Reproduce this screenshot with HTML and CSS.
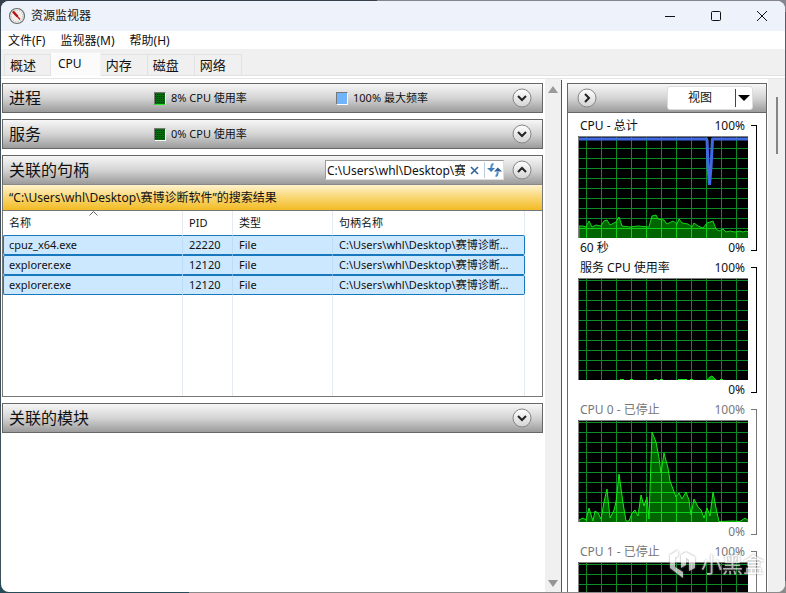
FILE: index.html
```html
<!DOCTYPE html>
<html lang="zh-CN">
<head>
<meta charset="utf-8">
<title>资源监视器</title>
<link rel="stylesheet" href="styles.css">
</head>
<body>
<svg class="defs" aria-hidden="true">
  <defs>
    <pattern id="grid" width="15" height="10" x="8" y="2" patternUnits="userSpaceOnUse"><path d="M.5 0V10M0 .5H15" stroke="#0c8c28" fill="none"/></pattern>
    <pattern id="lit" width="15" height="10" x="8" y="2" patternUnits="userSpaceOnUse"><path fill="#006400" d="M0 0H15V10H0z"/><path d="M.5 0V10M0 .5H15" stroke="#0cd016" fill="none"/></pattern>
    <linearGradient id="knob" x2="0" y2="1"><stop stop-color="#fff"/><stop offset="1" stop-color="#d2d2d2"/></linearGradient>
    <symbol id="down" viewBox="0 0 20 20"><circle cx="10" cy="10" r="9" fill="url(#knob)" stroke="#858585"/><path d="M6 8l4 4 4-4" fill="none" stroke="#222" stroke-width="2"/></symbol>
    <symbol id="up" viewBox="0 0 20 20"><circle cx="10" cy="10" r="9" fill="url(#knob)" stroke="#858585"/><path d="M6 12l4-4 4 4" fill="none" stroke="#222" stroke-width="2"/></symbol>
    <symbol id="right" viewBox="0 0 20 20"><circle cx="10" cy="10" r="9" fill="url(#knob)" stroke="#858585"/><path d="M8 6l4 4-4 4" fill="none" stroke="#222" stroke-width="2"/></symbol>
  </defs>
</svg>
<div class="window">
  <header class="titlebar">
    <svg width="18" height="18" viewBox="0 0 18 18" aria-hidden="true"><circle cx="9" cy="9" r="7.500" fill="#f3eeec" stroke="#65736e" stroke-width="1.200"/><circle cx="9" cy="9" r="5.800" fill="none" stroke="#b9b0ac" stroke-dasharray="1 1.400"/><path d="M5 4.500L12 12.500" stroke="#c01c18" stroke-width="1.400"/><path d="M5 4.500L9.500 9.500" stroke="#b01510" stroke-width="2.400"/></svg>
    <h1>资源监视器</h1>
    <div class="caption">
      <button aria-label="最小化"><svg width="12" height="12"><path d="M1 6.500H11" stroke="#111"/></svg></button>
      <button aria-label="最大化"><svg width="12" height="12"><rect x="1.500" y="1.500" width="9" height="9" rx="1" fill="none" stroke="#111"/></svg></button>
      <button aria-label="关闭"><svg width="12" height="12"><path d="M1 1L11 11M11 1L1 11" stroke="#111"/></svg></button>
    </div>
  </header>
  <nav class="menu"><button>文件(F)</button><button>监视器(M)</button><button>帮助(H)</button></nav>
  <div class="tabs" role="tablist">
    <button role="tab">概述</button><button role="tab" class="active" aria-selected="true">CPU</button><button role="tab">内存</button><button role="tab">磁盘</button><button role="tab">网络</button>
  </div>
  <div class="content">
    <main class="main">
      <section class="bar">
        <h2>进程</h2>
        <span class="legend"><i class="chip green busy"></i>8% CPU 使用率</span>
        <span class="legend"><i class="chip blue"></i>100% 最大频率</span>
        <button class="knob" aria-label="展开进程"><svg width="20" height="20"><use href="#down"/></svg></button>
      </section>
      <section class="bar">
        <h2>服务</h2>
        <span class="legend"><i class="chip green"></i>0% CPU 使用率</span>
        <button class="knob" aria-label="展开服务"><svg width="20" height="20"><use href="#down"/></svg></button>
      </section>
      <section class="group">
        <div class="bar">
          <h2>关联的句柄</h2>
          <div class="search">
            <input type="text" aria-label="搜索句柄" value="C:\Users\whl\Desktop\赛博诊断软件">
            <button aria-label="清除"><svg width="9" height="9"><path d="M1 1L8 8M8 1L1 8" stroke="#32649a" stroke-width="1.600"/></svg></button>
            <button class="refresh" aria-label="刷新"><svg width="15" height="14" viewBox="0 0 15 14"><path d="M6.500 1C4.500 1 4.300 2.500 4.300 5" stroke="#4d8fc8" stroke-width="2" fill="none"/><path d="M0 5H8L4.200 9z" fill="#3c7ab8"/><path d="M8.500 13C10.500 13 10.700 11.500 10.700 9" stroke="#4d8fc8" stroke-width="2" fill="none"/><path d="M7 8.500H15L10.800 4.500z" fill="#2f6196"/></svg></button>
          </div>
          <button class="knob" aria-label="折叠句柄"><svg width="20" height="20"><use href="#up"/></svg></button>
        </div>
        <p class="result">“C:\Users\whl\Desktop\赛博诊断软件”的搜索结果</p>
        <div class="list">
          <table>
            <colgroup><col class="c-name"><col class="c-pid"><col class="c-type"><col></colgroup>
            <thead><tr><th>名称<svg class="sort" width="9" height="5"><path d="M.5 4.500L4.500.5L8.500 4.500" fill="none" stroke="#666"/></svg></th><th>PID</th><th>类型</th><th>句柄名称</th></tr></thead>
            <tbody>
              <tr><td>cpuz_x64.exe</td><td>22220</td><td>File</td><td>C:\Users\whl\Desktop\赛博诊断...</td></tr>
              <tr><td>explorer.exe</td><td>12120</td><td>File</td><td>C:\Users\whl\Desktop\赛博诊断...</td></tr>
              <tr><td>explorer.exe</td><td>12120</td><td>File</td><td>C:\Users\whl\Desktop\赛博诊断...</td></tr>
            </tbody>
            <tfoot><tr><td></td><td></td><td></td><td></td></tr></tfoot>
          </table>
        </div>
      </section>
      <section class="bar">
        <h2>关联的模块</h2>
        <button class="knob" aria-label="展开模块"><svg width="20" height="20"><use href="#down"/></svg></button>
      </section>
    </main>
    <div class="scroll"><svg width="10" height="7"><path d="M0 7L5 0L10 7z" fill="#9a9a9a"/></svg><svg width="10" height="7"><path d="M0 0H10L5 7z" fill="#959595"/></svg></div>
    <aside class="side">
      <div class="bar">
        <button class="knob" aria-label="隐藏图表"><svg width="20" height="20"><use href="#right"/></svg></button>
        <button class="view"><span>视图</span><svg width="16" height="18"><path d="M.5 0V18" stroke="#444"/><path d="M3 6H15L9 12z" fill="#000"/></svg></button>
      </div>
      <figure class="graph">
        <figcaption><span>CPU - 总计</span><span>100%</span></figcaption>
        <svg class="plot" viewBox="0 0 170 102" preserveAspectRatio="none"><rect width="170" height="102" fill="#000"/><rect width="170" height="102" fill="url(#grid)"/>
          <path fill="url(#lit)" stroke="#16d816" d="M1 103V90L5 90 8 91 11 85 14 91 18 89 23 90 26 85 29 84 32 89 38 86 41 81 44 90 52 91 60 90 71 91 74 80 78 79 80 83 86 84 89 88 95 85 99 88 101 83 104 87 110 88 114 91 116 87 120 90 125 92 129 87 135 85 138 93 141 95 145 93 148 96 152 95 157 96 162 95 165 96 168 95 171 96V103z"/>
          <path d="M1 3H129L130 31L131.500 49L133 31L134.500 3H170" fill="none" stroke="#4169e1" stroke-width="3"/><path d="M129 1h5l-2.500 4z" fill="#000"/><path d="M.5 102V.5H170" fill="none" stroke="#808080"/></svg>
        <div class="foot"><span>60 秒</span><span>0%</span></div><i class="bracket"></i>
      </figure>
      <figure class="graph">
        <figcaption><span>服务 CPU 使用率</span><span>100%</span></figcaption>
        <svg class="plot" viewBox="0 0 170 102" preserveAspectRatio="none"><rect width="170" height="102" fill="#000"/><rect width="170" height="102" fill="url(#grid)"/>
          <path d="M129 102L131 99.500L134 98L138 102z" fill="#00a000" stroke="#16d816"/><path d="M42 101.500h4M52 101.500h3M76 101.500h3M82 101.500h3M100 101.500h9M112 101.500h3M142 101.500h3" stroke="#20ee20"/><path d="M.5 102V.5H170" fill="none" stroke="#808080"/></svg>
        <div class="foot"><span></span><span>0%</span></div><i class="bracket"></i>
      </figure>
      <figure class="graph stopped">
        <figcaption><span>CPU 0 - 已停止</span><span>100%</span></figcaption>
        <svg class="plot" viewBox="0 0 170 102" preserveAspectRatio="none"><rect width="170" height="102" fill="#000"/><rect width="170" height="102" fill="url(#grid)"/>
          <path fill="url(#lit)" stroke="#16e816" d="M1 103V100L5 98 8 100 11 88 15 101 17 91 20 93 23 99 26 82 29 69 32 98 36 90 38 82 41 54 45 83 48 101 51 101 54 93 57 90 60 96 63 75 66 86 69 77 71 99 74 12 78 22 81 38 83 53 86 33 90 48 92 61 98 77 101 73 104 79 108 72 111 80 113 95 116 79 120 87 123 90 126 98 129 88 132 96 135 72 138 88 141 101.500 155 101 162 101.500 167 98 171 101V103z"/><path d="M.5 102V.5H170" fill="none" stroke="#808080"/></svg>
        <div class="foot"><span></span><span>0%</span></div><i class="bracket"></i>
      </figure>
      <figure class="graph stopped">
        <figcaption><span>CPU 1 - 已停止</span><span>100%</span></figcaption>
        <svg class="plot" viewBox="0 0 170 102" preserveAspectRatio="none"><rect width="170" height="102" fill="#000"/><rect width="170" height="102" fill="url(#grid)"/><path d="M.5 102V.5H170" fill="none" stroke="#808080"/></svg>
        <i class="bracket"></i>
      </figure>
    </aside>
    <div class="track"><i></i></div>
  </div>
  <div class="mark" aria-hidden="true"><svg width="28" height="30" viewBox="0 0 28 30"><path d="M9 1L1 6V19L14 29V23L6 18V9L9 7z" fill="#fff"/><path d="M12 14V6L17 3L26 8V19L20 22V11L17 9V16L12 19z" fill="#fff"/></svg><span>小黑盒</span></div>
</div>
</body>
</html>
```
FILE: styles.css
```css
* { box-sizing: border-box; }
body {
  margin: 0;
  height: 100vh;
  padding: 1px;
  overflow: hidden;
  background: linear-gradient(90deg, #35404c 0 48%, #85858f 48%) top / 100% 12px no-repeat,
    linear-gradient(90deg, #274b57 0 24%, #8b8b8b 24%) bottom / 100% 12px no-repeat,
    linear-gradient(90deg, #40505a 50%, #5c5c66 50%);
  font: 12px/16px "Noto Sans", "Noto Sans CJK SC", sans-serif;
  color: #111;
}
.defs { position: absolute; width: 0; height: 0; }
svg { display: block; flex: none; }
h1, h2, p, figure { margin: 0; font-weight: 400; }
button { border: 0; padding: 0; background: none; font: inherit; color: inherit; }

.window {
  position: relative;
  display: flex;
  flex-direction: column;
  height: 100%;
  overflow: hidden;
  border-radius: 8px;
  background: #fff;
}
.titlebar { display: flex; align-items: center; height: 30px; padding-left: 7px; background: #edf2fb; }
.titlebar h1 { margin-left: 5px; font-size: 12px; }
.caption { display: flex; margin-left: auto; }
.caption button { display: grid; place-items: center; width: 46px; height: 28px; }
.menu { display: flex; gap: 15px; height: 18px; padding-left: 7px; }
.menu button { line-height: 20px; }

.tabs {
  display: flex;
  align-items: flex-end;
  height: 27px;
  padding-left: 3px;
  background: #f0f0f0;
  border-bottom: 1px solid #e2e2e2;
}
.tabs button {
  height: 21px;
  padding: 0 15px 0 5px;
  border: 1px solid #e2e2e2;
  border-width: 1px 1px 0 0;
  font-size: 13px;
}
.tabs button:first-child { padding-right: 14px; border-left-width: 1px; }
.tabs .active { height: 24px; margin-bottom: -1px; padding: 0 18px 2px 7px; background: #fbfbfb; border-color: #f4f4f4; font-size: 12px; }

.content { display: flex; flex: 1; min-height: 0; margin-top: 2px; border-top: 1px solid #e6e6e6; }
.main { display: flex; flex: 1; flex-direction: column; gap: 6px; min-width: 0; padding: 4px 2px 0 1px; }
.bar {
  display: flex;
  align-items: center;
  height: 30px;
  padding: 0 10px 0 6px;
  border: 1px solid #666;
  background: linear-gradient(#f7f7f7, #d4d4d4 50%, #9b9b9b);
}
.bar h2 { flex: none; width: 145px; font-size: 16px; line-height: 24px; }
.knob { margin-left: auto; }
.legend { display: flex; flex: 0 0 182px; align-items: center; gap: 5px; font-size: 11px; white-space: nowrap; }
.legend + .legend { flex: 0 0 120px; }
.chip { width: 12px; height: 13px; border: 1px solid; border-color: #777 #fff #fff #777; }
.green { background: repeating-linear-gradient(90deg, transparent 0 1px, #05680d 1px 2px), repeating-linear-gradient(#007a0c 0 1px, #02300a 1px 2px); }
.busy { border-bottom-color: #2ce82c; }
.blue { background: #70b4fb; }

.search { display: flex; align-items: center; width: 179px; height: 20px; margin: 0 -2px 0 auto; border: 1px solid #aaa; border-color: #999 #ddd #ddd #999; background: #fff; }
.search input { flex: 1; min-width: 0; height: 18px; padding: 0 0 0 1px; border: 0; outline: 0; font: inherit; background: none; color: #111; }
.search button { display: grid; place-items: center; width: 19px; height: 16px; }
.search .refresh { border-left: 1px solid #bcd; }
.search + .knob { margin-left: 10px; }

.group > .bar { border-bottom: 1px solid #888; }
.result { height: 26px; padding-left: 6px; border: 1px solid #777; border-top: 0; background: linear-gradient(#fff3cd, #f9d672 50%, #f3bb24); line-height: 25px; white-space: nowrap; }
.list { padding-right: 17px; border: 1px solid #777; border-top: 0; }
table { width: 100%; table-layout: fixed; border-spacing: 0; font-size: 11px; }
.c-name { width: 180px; }
.c-pid { width: 50px; }
.c-type { width: 100px; }
th, td { padding: 0 0 0 6px; border-right: 1px solid #e4e9f2; text-align: left; font-weight: 400; white-space: nowrap; }
th { position: relative; height: 24px; }
.sort { position: absolute; top: 0; left: 48%; }
tbody td { height: 20px; border-top: 1px solid #1878be; border-bottom: 1px solid #1878be; border-right-color: #bfdcf5; background: #cce8ff; line-height: 18px; }
tbody td:first-child { padding-left: 5px; border-left: 1px solid #1878be; border-radius: 2px 0 0 2px; }
tbody td:last-child { border-right-color: #1878be; border-radius: 0 2px 2px 0; }
tfoot td { height: 101px; }

.scroll { display: flex; flex-direction: column; align-items: center; justify-content: space-between; width: 16px; padding: 7px 0 5px; background: #f0f0f0; }
.side { width: 206px; padding-top: 3px; margin-right: 1px; border-left: 1px solid #555; padding-left: 5px; overflow: hidden; margin-top: 1px; }
.side .bar { padding: 0 13px 0 9px; }
.side .knob { margin: 0; }
.view { display: flex; align-items: center; justify-content: space-between; width: 86px; height: 24px; margin-left: auto; padding: 0 1px 0 20px; border: 1px solid #ddd; border-radius: 3px; background: #fff; }
.graph { position: relative; height: 142px; padding: 5px 18px 0 10px; border: 1px solid #666; border-width: 0 1px; }
.graph figcaption, .foot { display: flex; justify-content: space-between; height: 18px; padding: 0 3px 0 2px; line-height: 16px; white-space: nowrap; }
.foot { padding-top: 2px; }
.plot { width: 100%; height: 102px; }
.bracket { position: absolute; top: 12px; right: 9px; width: 6px; height: 126px; border: 1px solid #000; border-left: 0; }
.stopped { color: #777; }
.stopped .bracket { border-color: #777; }
.track { width: 17px; background: #f0f0f0; padding: 18px 0 0 8px; }
.track i { display: block; width: 2px; height: 57px; background: #858585; }

.mark { position: absolute; right: 21px; bottom: 13px; display: flex; align-items: center; gap: 4px; opacity: .7; color: #fff; font-size: 21px; line-height: 28px; filter: drop-shadow(0 0 1px #777); }
```
